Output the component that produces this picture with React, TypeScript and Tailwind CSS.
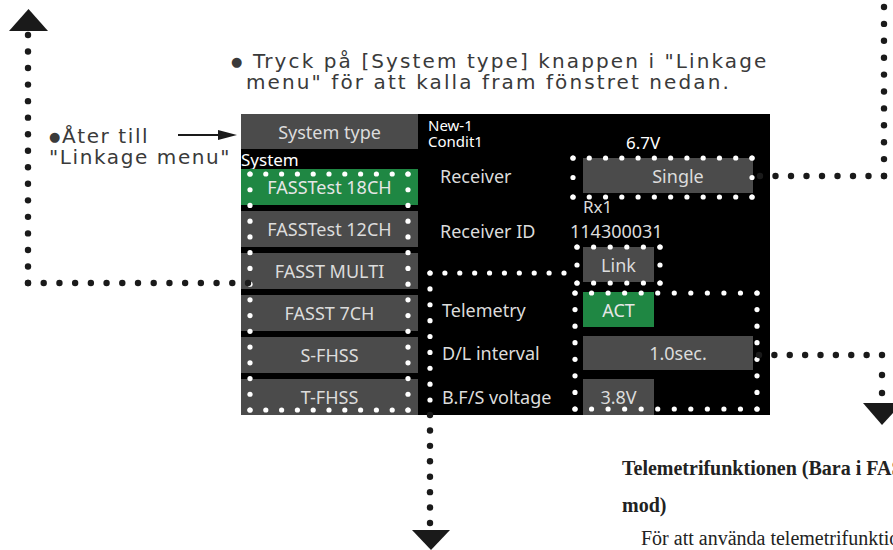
import React from 'react'

type Pt = [number, number]

// evenly spaced dots between two points (n intervals)
function line(a: Pt, b: Pt, n: number): Pt[] {
  const out: Pt[] = []
  for (let i = 0; i <= n; i++) {
    out.push([a[0] + ((b[0] - a[0]) * i) / n, a[1] + ((b[1] - a[1]) * i) / n])
  }
  return out
}

function rect(x1: number, y1: number, x2: number, y2: number, nx: number, ny: number): Pt[] {
  return [
    ...line([x1, y1], [x2, y1], nx),
    ...line([x1, y2], [x2, y2], nx),
    ...line([x1, y1], [x1, y2], ny),
    ...line([x2, y1], [x2, y2], ny),
  ]
}

const blackDots: Pt[] = [
  ...line([28, 283], [248, 283], 14),
  ...line([28, 283], [28, 35], 15),
  ...line([760, 176], [884, 176], 8),
  ...line([884, 176], [884, 7], 10),
  ...line([759, 355], [882, 355], 8),
  [882, 375],
  [882, 393],
  ...line([430, 415], [430, 523], 7),
]

const whiteDots: Pt[] = [
  ...rect(250, 174, 408, 410, 10, 15),
  ...rect(573, 158, 752, 197, 11, 2),
  ...rect(577, 247, 660, 283, 5, 2),
  ...line([430, 273], [564, 273], 9),
  ...line([430, 273], [430, 400], 8),
  ...rect(575, 293, 757, 409, 11, 7),
]

function Overlay() {
  return (
    <svg className="absolute left-0 top-0 pointer-events-none" width={893} height={550} viewBox="0 0 893 550">
      {whiteDots.map(([x, y], i) => (
        <circle key={'w' + i} cx={x} cy={y} r={2.6} fill="#ffffff" />
      ))}
      {blackDots.map(([x, y], i) => (
        <circle key={'b' + i} cx={x} cy={y} r={3.2} fill="#1a1a1a" />
      ))}
      <polygon points="9,31 48,31 28.5,9" fill="#1a1a1a" />
      <polygon points="863,403 902,403 882,425" fill="#1a1a1a" />
      <polygon points="412,530 450,530 431,550" fill="#1a1a1a" />
      {/* arrow to System type */}
      <line x1={178} y1={135} x2={222} y2={135} stroke="#1a1a1a" strokeWidth={2} />
      <polygon points="218,130 237,135 218,140" fill="#1a1a1a" />
    </svg>
  )
}

const btn = 'bg-[#4b4b4b] flex items-center justify-center text-[#dcdcdc]'

function Screen() {
  const systems = ['FASSTest 12CH', 'FASST MULTI', 'FASST 7CH', 'S-FHSS', 'T-FHSS']
  return (
    <div className="absolute left-[241px] top-[114px] w-[529px] h-[301px] bg-black flex text-[18px] font-['Noto_Sans',sans-serif] text-[#dcdcdc] leading-none">
      <div className="w-[177px] flex flex-col">
        <div className={`${btn} h-[35px]`}>System type</div>
        <div className="h-[20px] pt-[2px] text-[17px] text-white">System</div>
        <div className="flex flex-col gap-[6px]">
          <div className="h-[36px] bg-[#1f8743] flex items-center justify-center text-[#e6e6e6]">FASSTest 18CH</div>
          {systems.map((s) => (
            <div key={s} className={`${btn} h-[36px]`}>
              {s}
            </div>
          ))}
        </div>
      </div>

      <div className="flex-1 flex flex-col">
        <div className="h-[44px] flex">
          <div className="w-[165px] pl-[10px] pt-[3px] text-[15px] leading-[16px] text-white">
            <div>New-1</div>
            <div>Condit1</div>
          </div>
          <div className="pl-[43px] pt-[20px] text-[17px] text-white">6.7V</div>
        </div>

        <div className="h-[35px] flex items-center">
          <div className="w-[165px] pl-[22px]">Receiver</div>
          <div className={`${btn} w-[170px] h-full pl-[20px]`}>Single</div>
        </div>

        <div className="h-[28px] flex pt-[5px]">
          <div className="w-[165px]" />
          <div className="text-[17px]">Rx1</div>
        </div>

        <div className="h-[26px] flex items-start pt-[1px]">
          <div className="w-[152px] pl-[22px]">Receiver ID</div>
          <div>114300031</div>
        </div>

        <div className="h-[35px] flex">
          <div className="w-[165px]" />
          <div className={`${btn} w-[71px] h-full`}>Link</div>
        </div>

        <div className="h-[35px] mt-[10px] flex items-center">
          <div className="w-[165px] pl-[24px]">Telemetry</div>
          <div className="w-[71px] h-full bg-[#1f8743] flex items-center justify-center text-[#e6e6e6]">ACT</div>
        </div>

        <div className="h-[34px] mt-[9px] flex items-center">
          <div className="w-[165px] pl-[24px]">D/L interval</div>
          <div className={`${btn} w-[170px] h-full pl-[20px]`}>1.0sec.</div>
        </div>

        <div className="h-[36px] mt-[9px] flex items-center">
          <div className="w-[165px] pl-[24px]">B.F/S voltage</div>
          <div className={`${btn} w-[71px] h-full`}>3.8V</div>
        </div>
      </div>
    </div>
  )
}

export default function App() {
  return (
    <div className="relative w-[893px] h-[550px] overflow-hidden bg-white">
      <div className="absolute left-[231px] top-[51px] text-[20px] leading-[21px] text-[#3a3a3a] tracking-[2.1px] font-['DejaVu_Sans',sans-serif] whitespace-nowrap">
        <div>
          <span className="text-[13px] align-[2px]">●</span> Tryck på [System type] knappen i "Linkage
        </div>
        <div className="pl-[15px]">menu" för att kalla fram fönstret nedan.</div>
      </div>

      <div className="absolute left-[49px] top-[126px] text-[20px] leading-[20px] text-[#3a3a3a] tracking-[1.6px] font-['DejaVu_Sans',sans-serif] whitespace-nowrap">
        <div>
          <span className="text-[13px] align-[2px]">●</span>Åter till
        </div>
        <div>"Linkage menu"</div>
      </div>

      <Screen />

      <div className="absolute left-[622px] top-[453px] text-[20px] text-[#222] font-['Liberation_Serif',serif] whitespace-nowrap">
        <div className="font-bold leading-[30px]">Telemetrifunktionen (Bara i FASSTest</div>
        <div className="font-bold leading-[44px]">mod)</div>
        <div className="pl-[19px] leading-[22px]">För att använda telemetrifunktionen</div>
      </div>

      <Overlay />
    </div>
  )
}
